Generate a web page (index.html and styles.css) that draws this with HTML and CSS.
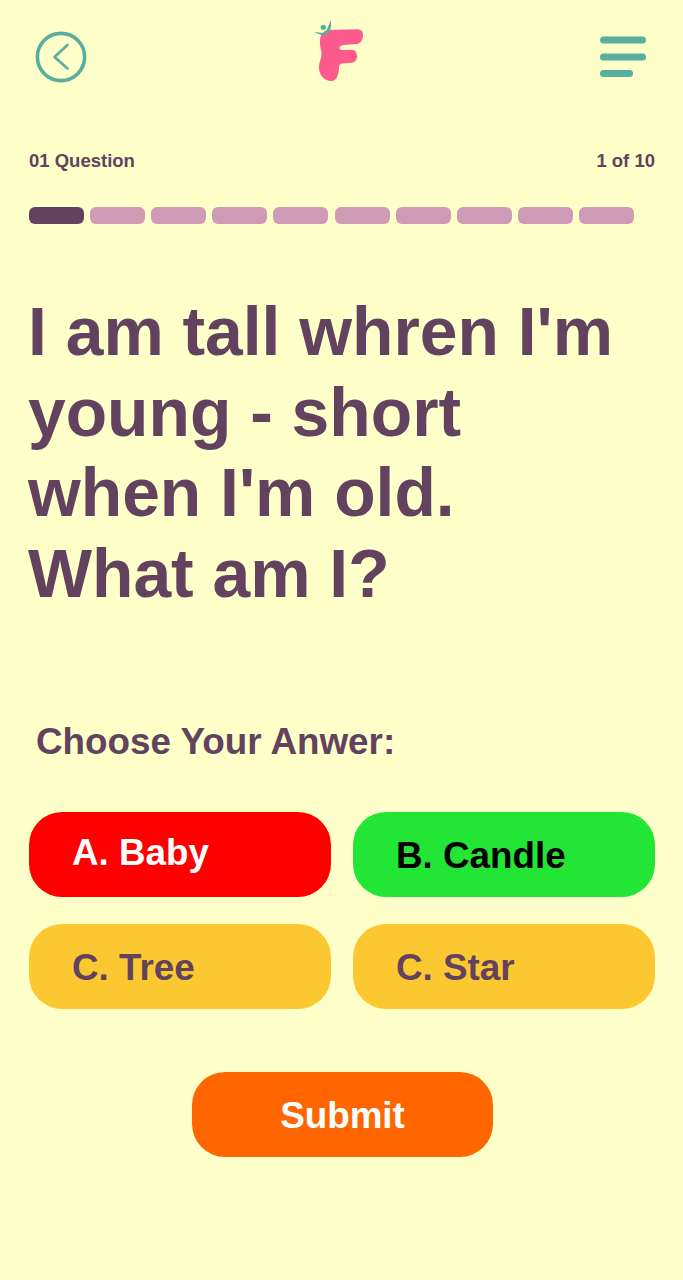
FILE: index.html
```html
<!DOCTYPE html>
<html lang="en">
<head>
  <meta charset="UTF-8" />
  <meta name="viewport" content="width=device-width, initial-scale=1" />
  <title>Quiz</title>
  <link rel="stylesheet" href="styles.css">
</head>
<body>
  <header class="top-bar">
    <svg class="back-icon" width="52" height="52" viewBox="0 0 52 52" fill="none">
      <circle cx="26" cy="26" r="23.600" stroke="#58ae9f" stroke-width="3.600"/>
      <path d="M32.500 14 L19.500 26 L32.500 37.500" stroke="#58ae9f" stroke-width="2.600" stroke-linecap="round" stroke-linejoin="round"/>
    </svg>
    <svg class="logo" width="50" height="64" viewBox="0 0 50 64">
      <path d="M6 22 C6 15 10 11 15 11 L43 10.300 C47 10.300 49 12.500 49 16 C49 21 46.500 24.500 43 25 L29 26 C26.500 26.500 25.500 27.500 25.500 29 C25.500 30.500 26.500 31 29 31 L38 30.700 C41 30.700 43 33.500 43 37.500 C43 41 41 43.500 37.500 43.800 L29 44.500 C26.500 44.800 25 45.500 25 48 C25 51 24.500 54 23.500 57 C22.500 60.500 20 62 17.500 62 C13 62 8.500 59.500 6.500 55 C4.500 51 4.500 47 6 42 C7.500 38 8 35 7 31 C6 28 6 25 6 22 Z" fill="#fd5a8e"/>
      <circle cx="9.300" cy="8.300" r="2.600" fill="#58ae9f"/>
      <path d="M0 13 C4 13 7 14 9.500 14 C12 13 14 9 16.700 1 C17.300 5 17 9.500 16 12 C15 14 14 15 12.700 15 L9.300 16.500 C6 15.500 3 14.500 0 13 Z" fill="#58ae9f"/>
    </svg>
    <svg class="menu-icon" width="48" height="43" viewBox="0 0 48 43" fill="#58ae9f">
      <rect x="1" y="1.500" width="46" height="7" rx="3.500"/>
      <rect x="1" y="18.500" width="46" height="7" rx="3.500"/>
      <rect x="1" y="35" width="33" height="7" rx="3.500"/>
    </svg>
  </header>

  <div class="meta-row">
    <span>01 Question</span>
    <span>1 of 10</span>
  </div>

  <div class="progress">
    <div class="seg active"></div>
    <div class="seg"></div>
    <div class="seg"></div>
    <div class="seg"></div>
    <div class="seg"></div>
    <div class="seg"></div>
    <div class="seg"></div>
    <div class="seg"></div>
    <div class="seg"></div>
    <div class="seg"></div>
  </div>

  <h1 class="question">I am tall whren I'm<br>young - short<br>when I'm old.<br>What am I?</h1>

  <h2 class="choose">Choose Your Anwer:</h2>

  <div class="answers">
    <button class="answer wrong">A. Baby</button>
    <button class="answer right">B. Candle</button>
    <button class="answer">C. Tree</button>
    <button class="answer">C. Star</button>
  </div>

  <div class="submit-wrap">
    <button class="submit-btn">Submit</button>
  </div>
</body>
</html>
```

FILE: styles.css
```css
body {
  margin: 0;
  height: 1280px;
  box-sizing: border-box;
  padding: 0 28px 0 29px;
  background: #ffffc9;
  color: #62425f;
  font-family: "Liberation Sans", Arial, sans-serif;
  font-weight: 700;
  overflow: hidden;
}

.top-bar {
  display: flex;
  justify-content: space-between;
  align-items: flex-start;
  padding: 19px 8px 0 6px;
  height: 144px;
  box-sizing: border-box;
}

.back-icon {
  margin-top: 12px;
}

.logo {
  margin-right: 8px;
}

.menu-icon {
  margin-top: 16px;
}

.meta-row {
  display: flex;
  justify-content: space-between;
  height: 40px;
  padding-top: 3px;
  box-sizing: border-box;
  font-size: 18.500px;
  line-height: 28px;
}

.progress {
  display: flex;
  gap: 6.100px;
  margin-top: 23px;
  margin-right: 21px;
}

.seg {
  flex: 1;
  height: 17px;
  border-radius: 6px;
  background: #cf9ab5;
}

.seg.active {
  background: #62425f;
}

.question {
  margin: 68px 0 0 -1px;
  font-size: 67.800px;
  line-height: 80.700px;
  font-weight: 700;
  white-space: nowrap;
}

.choose {
  margin: 103px 0 0 7px;
  font-size: 36.800px;
  line-height: 48px;
  font-weight: 700;
}

.answers {
  display: grid;
  grid-template-columns: 1fr 1fr;
  gap: 27px 22px;
  margin-top: 46px;
}

.answer {
  height: 85px;
  padding: 3px 0 0 43px;
  border: none;
  border-radius: 33px;
  background: #fcc832;
  color: #62425f;
  font: inherit;
  font-size: 36.800px;
  text-align: left;
}

.answer.wrong {
  padding: 0 0 3px 43px;
  background: #ff0000;
  color: #fff;
}

.answer.right {
  background: #23e536;
  color: #000;
}

.submit-wrap {
  display: flex;
  justify-content: center;
  margin-top: 63px;
  padding-left: 1px;
}

.submit-btn {
  width: 301px;
  height: 85px;
  padding: 3px 0 0;
  border: none;
  border-radius: 33px;
  background: #ff6600;
  color: #fff;
  font: inherit;
  font-size: 36.800px;
}
```
